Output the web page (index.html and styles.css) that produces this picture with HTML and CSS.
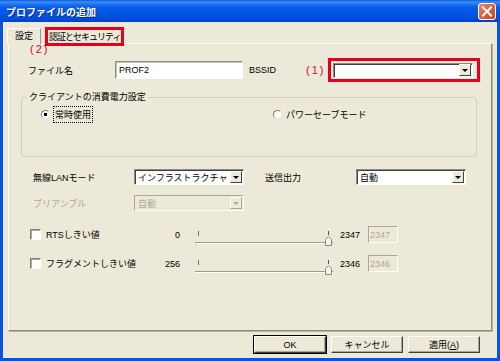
FILE: index.html
```html
<!DOCTYPE html>
<html lang="ja">
<head>
   <meta charset="UTF-8">
   <title>プロファイルの追加</title>
   <link rel="stylesheet" href="styles.css">
</head>
<body>
   <div class="window">
      <div class="titlebar">
         <span class="title">プロファイルの追加</span>
         <svg class="close" width="18" height="17" viewBox="0 0 18 17">
            <defs>
               <linearGradient id="cg" x1="0" y1="0" x2="1" y2="1">
                  <stop offset="0" stop-color="#EE8466"/>
                  <stop offset="1" stop-color="#C8401C"/>
               </linearGradient>
            </defs>
            <rect x="0.5" y="0.5" width="17" height="16" rx="2.5" fill="url(#cg)" stroke="#fff"/>
            <path d="M5 4.5 L13 12.5 M13 4.5 L5 12.5" stroke="#fff" stroke-width="2" stroke-linecap="square"/>
         </svg>
      </div>

      <div class="client">
         <div class="tabs">
            <div class="tab tab-active">設定</div>
            <div class="tab tab-other mark-tab">認証とセキュリティ</div>
            <span class="callout callout-tab">(2)</span>
         </div>

         <div class="panel">
            <div class="row row-name">
               <span class="lbl lbl-name">ファイル名</span>
               <div class="edit edit-name">PROF2</div>
               <span class="lbl lbl-bssid">BSSID</span>
               <span class="callout callout-combo">(1)</span>
               <div class="combo combo-bssid mark-combo">
                  <span class="combo-val"></span>
                  <span class="drop"><i></i></span>
               </div>
            </div>

            <fieldset class="group">
               <legend>クライアントの消費電力設定</legend>
               <div class="radios">
                  <span class="radio radio-first"><span class="dot dot-on"></span><span class="focus">常時使用</span></span>
                  <span class="radio"><span class="dot"></span>パワーセーブモード</span>
               </div>
            </fieldset>

            <div class="row row-sel row-lan">
               <span class="lbl lbl-left">無線LANモード</span>
               <div class="combo combo-sel">
                  <span class="combo-val">インフラストラクチャ</span>
                  <span class="drop"><i></i></span>
               </div>
               <span class="lbl lbl-tx">送信出力</span>
               <div class="combo combo-sel">
                  <span class="combo-val">自動</span>
                  <span class="drop"><i></i></span>
               </div>
            </div>

            <div class="row row-sel row-pre">
               <span class="lbl lbl-left is-disabled">プリアンブル</span>
               <div class="combo combo-sel combo-disabled">
                  <span class="combo-val">自動</span>
                  <span class="drop"><i></i></span>
               </div>
            </div>

            <div class="row row-slider row-rts">
               <span class="check"></span>
               <span class="slider-lbl">RTSしきい値</span>
               <span class="slider-min">0</span>
               <svg class="slider" width="138" height="20" viewBox="0 0 138 20">
                  <line x1="3.5" y1="5" x2="3.5" y2="10" stroke="#6F6F6F"/>
                  <line x1="0" y1="16.5" x2="138" y2="16.5" stroke="#9D9A8C"/>
                  <line x1="0" y1="17.5" x2="138" y2="17.5" stroke="#fff"/>
                  <line x1="133.5" y1="5" x2="133.5" y2="9" stroke="#555"/>
                  <path d="M130.5 19.5 V13.5 L133.5 10.5 L136.5 13.5 V19.5 Z" fill="#F4F3EE" stroke="#8E8B7E"/>
               </svg>
               <span class="slider-max">2347</span>
               <div class="edit edit-num">2347</div>
            </div>

            <div class="row row-slider row-frag">
               <span class="check"></span>
               <span class="slider-lbl">フラグメントしきい値</span>
               <span class="slider-min">256</span>
               <svg class="slider" width="138" height="20" viewBox="0 0 138 20">
                  <line x1="3.5" y1="5" x2="3.5" y2="10" stroke="#6F6F6F"/>
                  <line x1="0" y1="16.5" x2="138" y2="16.5" stroke="#9D9A8C"/>
                  <line x1="0" y1="17.5" x2="138" y2="17.5" stroke="#fff"/>
                  <line x1="133.5" y1="5" x2="133.5" y2="9" stroke="#555"/>
                  <path d="M130.5 19.5 V13.5 L133.5 10.5 L136.5 13.5 V19.5 Z" fill="#F4F3EE" stroke="#8E8B7E"/>
               </svg>
               <span class="slider-max">2346</span>
               <div class="edit edit-num">2346</div>
            </div>
         </div>

         <div class="buttons">
            <button class="btn btn-default">OK</button>
            <button class="btn">キャンセル</button>
            <button class="btn">適用(<u>A</u>)</button>
         </div>
      </div>
   </div>
</body>
</html>
```

FILE: styles.css
```css
* {
   box-sizing: border-box;
}
body {
   margin: 0;
   font-family: "Liberation Sans", "Noto Sans CJK JP", sans-serif;
   font-size: 9px;
   color: #000;
   background-color: #fff;
}
.window {
   width: 500px;
   height: 361px;
   display: flex;
   flex-direction: column;
   background-color: #ECE9D8;
}

/* Title bar */
.titlebar {
   flex: none;
   height: 22px;
   display: flex;
   align-items: center;
   justify-content: space-between;
   padding: 0 4px 0 6px;
   background: linear-gradient(to bottom, #0A5CDC 0, #3C8CF6 2px, #2476F0 4px, #0A5CE8 7px, #0055E4 14px, #004CDA 19px, #0041C8 22px);
}
.title {
   color: #fff;
   font-size: 10px;
   font-weight: bold;
   text-shadow: 1px 1px 0 #0B2A8C;
}
.close {
   display: block;
}

/* Window body */
.client {
   flex: 1;
   display: flex;
   flex-direction: column;
   padding: 0 5px;
   border: 3px solid #0B52DC;
   border-top: 0;
}
.tabs {
   position: relative;
   flex: none;
   height: 21px;
   display: flex;
   align-items: flex-end;
}
.tab {
   position: relative;
   height: 14px;
   display: flex;
   align-items: center;
   padding: 0 3px;
   border: 1px solid #919B9C;
   border-color: #fff #919B9C transparent #fff;
   border-bottom: 0;
}
.tab-active {
   z-index: 1;
   height: 16px;
   margin: 0 6px -1px -1px;
   padding: 0 7px 2px;
   background-color: #ECE9D8;
}
.tab-other {
   padding: 0 1px;
   letter-spacing: -1px;
}
.mark-tab::after {
   content: '';
   position: absolute;
   left: -3px;
   top: -3px;
   right: -3px;
   bottom: -3px;
   border: 3px solid #E4001B;
}
.callout {
   color: #E4001B;
   font-size: 11px;
   letter-spacing: 2px;
}
.callout-tab {
   position: absolute;
   left: 22px;
   top: 21px;
   z-index: 2;
}

/* Tab page */
.panel {
   flex: none;
   height: 288px;
   display: flex;
   flex-direction: column;
   border: 1px solid;
   border-color: #fff #8C8A7C #8C8A7C #fff;
   box-shadow: 1px 1px 0 #B7B4A5;
}
.row {
   flex: none;
   display: flex;
   align-items: center;
}
.lbl.is-disabled {
   color: #ACA899;
}
.row-name {
   height: 18px;
   margin-top: 17px;
   padding-left: 19px;
}
.lbl-name {
   width: 87px;
}
.lbl-bssid {
   width: 57px;
   margin-left: 6px;
}
.callout-combo {
   width: 27px;
}

.edit {
   height: 18px;
   display: flex;
   align-items: center;
   padding-left: 3px;
   background-color: #fff;
   border: 1px solid;
   border-color: #8A8A8A #fff #fff #8A8A8A;
   box-shadow: inset 1px 1px 0 #C9C7BA;
}
.edit-name {
   width: 128px;
}
.edit-num {
   width: 30px;
   height: 17px;
   padding-left: 1px;
   color: #ACA899;
   background-color: #ECE9D8;
   border-color: #ACA899 #fff #fff #ACA899;
   box-shadow: none;
}

.combo {
   position: relative;
   height: 16px;
   display: flex;
   align-items: center;
   background-color: #fff;
   border: 1px solid;
   border-color: #8A8A8A #fff #fff #8A8A8A;
   box-shadow: inset 1px 1px 0 #404040;
}
.combo-val {
   flex: 1;
   padding-left: 3px;
   white-space: nowrap;
}
.drop {
   width: 12px;
   height: 12px;
   margin-right: 1px;
   display: flex;
   align-items: center;
   justify-content: center;
   background-color: #ECE9D8;
   border: 1px solid;
   border-color: #fff #404040 #404040 #fff;
}
.drop i {
   border-left: 3px solid transparent;
   border-right: 3px solid transparent;
   border-top: 3px solid #000;
}
.combo-bssid {
   width: 140px;
   height: 15px;
}
.mark-combo::after {
   content: '';
   position: absolute;
   left: -6px;
   top: -6px;
   right: -8px;
   bottom: -5px;
   border: 3px solid #E4001B;
}
.combo-sel {
   width: 110px;
}
.combo-disabled {
   color: #ACA899;
   background-color: #ECE9D8;
   border-color: #ACA899 #fff #fff #ACA899;
   box-shadow: none;
}
.combo-disabled .drop {
   border-color: #fff #ACA899 #ACA899 #fff;
}
.combo-disabled .drop i {
   border-top-color: #ACA899;
}

/* Power group */
.group {
   flex: none;
   width: 456px;
   height: 66px;
   margin: 12px 0 0 12px;
   padding: 0 0 0 5px;
   border: 1px solid #D0D0BF;
   border-radius: 3px;
}
.group legend {
   padding: 0 2px;
   line-height: 12px;
}
.radios {
   height: 14px;
   margin-top: 4px;
   padding-left: 14px;
   display: flex;
   align-items: center;
}
.radio {
   display: flex;
   align-items: center;
   gap: 4px;
}
.radio-first {
   width: 232px;
}
.dot {
   width: 9px;
   height: 9px;
   border-radius: 50%;
   background-color: #fff;
   border: 1px solid;
   border-color: #808080 #E8E6DC #E8E6DC #808080;
}
.dot-on {
   background: radial-gradient(circle, #000 0, #000 1.6px, #fff 2px);
}
.focus {
   padding: 1px;
   outline: 1px dotted #000;
   outline-offset: 0;
}

/* Mode rows */
.row-sel {
   height: 16px;
   padding-left: 24px;
}
.row-lan {
   margin-top: 12px;
}
.row-pre {
   margin-top: 10px;
}
.lbl-left {
   width: 101px;
}
.lbl-tx {
   width: 91px;
   margin-left: 21px;
}

/* Threshold rows */
.row-slider {
   height: 17px;
   padding-left: 21px;
}
.row-rts {
   margin-top: 15px;
}
.row-frag {
   margin-top: 12px;
}
.check {
   width: 11px;
   height: 11px;
   background-color: #fff;
   border: 1px solid;
   border-color: #808080 #fff #fff #808080;
   box-shadow: inset 1px 1px 0 #ACA899;
}
.slider-lbl {
   width: 118px;
   margin-left: 5px;
}
.slider-min {
   width: 16px;
   text-align: right;
}
.slider {
   align-self: flex-start;
   margin-left: 15px;
}
.slider-max {
   width: 28px;
   margin-left: 7px;
}

/* Buttons */
.buttons {
   flex: none;
   height: 17px;
   margin-top: 5px;
   padding-right: 12px;
   display: flex;
   justify-content: flex-end;
   gap: 5px;
}
.btn {
   width: 72px;
   height: 17px;
   padding: 0;
   font-family: inherit;
   font-size: 9px;
   color: #000;
   background-color: #ECE9D8;
   border: 1px solid;
   border-color: #fff #404040 #404040 #fff;
   box-shadow: inset -1px -1px 0 #ACA899;
}
.btn-default {
   outline: 1px solid #000;
   outline-offset: 0;
   border-color: #fff #404040 #404040 #fff;
}
```
